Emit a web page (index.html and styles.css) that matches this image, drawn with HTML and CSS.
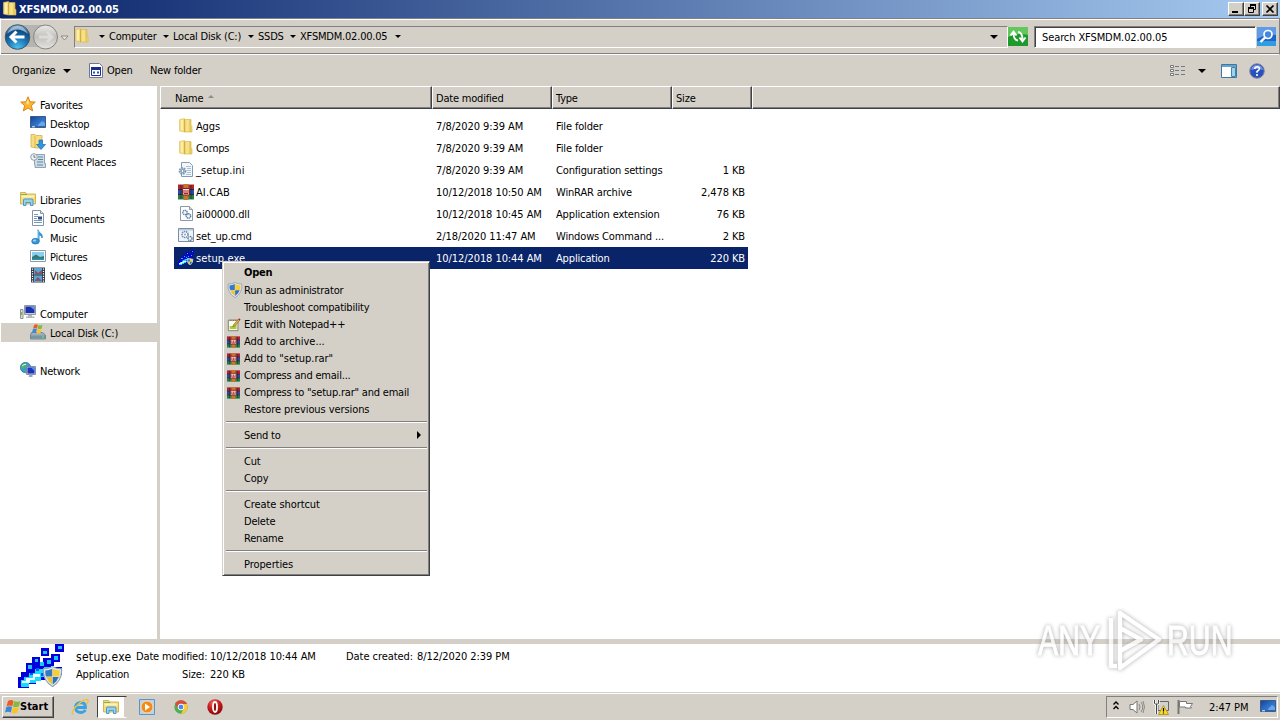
FILE: index.html
```
<!DOCTYPE html>
<html lang="en">
<head>
<meta charset="utf-8">
<title>XFSMDM.02.00.05</title>
<link rel="stylesheet" href="styles.css">
</head>
<body>
<svg class="defs" width="0" height="0">
  <defs>
    <linearGradient id="gFold" x1="0" x2="1" y1="0" y2="0"><stop offset="0" stop-color="#f4dc78"/><stop offset=".5" stop-color="#f7e48c"/><stop offset=".75" stop-color="#e4c450"/><stop offset="1" stop-color="#f3dc7c"/></linearGradient>
    <radialGradient id="gBack" cx=".5" cy=".95" r=".9"><stop offset="0" stop-color="#4cc4f0"/><stop offset=".45" stop-color="#1b78b8"/><stop offset=".8" stop-color="#124a80"/><stop offset="1" stop-color="#6fa6cc"/></radialGradient>
    <linearGradient id="gFwd" x1="0" x2="0" y1="0" y2="1"><stop offset="0" stop-color="#eceae6"/><stop offset=".5" stop-color="#c2c0bc"/><stop offset="1" stop-color="#e6e4e0"/></linearGradient>
    <linearGradient id="gScreen" x1="0" x2="1" y1="0" y2="1"><stop offset="0" stop-color="#16408c"/><stop offset=".5" stop-color="#2f6fc8"/><stop offset="1" stop-color="#3a8ae0"/></linearGradient>
    <radialGradient id="gOpera" cx=".4" cy=".25" r=".8"><stop offset="0" stop-color="#f06a60"/><stop offset=".5" stop-color="#c81a1a"/><stop offset="1" stop-color="#7c0808"/></radialGradient>
  </defs>
  <symbol id="folder" viewBox="0 0 16 16"><path d="M1.500 1.500l5-1V14l-5-1z" fill="#f5dc78" stroke="#dfc060" stroke-width=".6"/><path d="M6.500 1.500H13V8l1 .5V14H6.500z" fill="url(#gFold)" stroke="#d4b24a" stroke-width=".6"/><path d="M4 2v10.500" stroke="#fff6c4" stroke-width="1.400"/><path d="M6.700 1.500V14" stroke="#caa43a" stroke-width=".8"/></symbol>
  <symbol id="star" viewBox="0 0 16 16"><path d="M8 .8l2 5 5.300.3-4 3.500 1.400 5.300L8 12l-4.700 2.900L4.700 9.600.7 6.100 6 5.800z" fill="#fbb62e" stroke="#e2801c"/><path d="M8 3l1.200 3.500L8 9 6 6.500z" fill="#ffe28a"/></symbol>
  <symbol id="desktop" viewBox="0 0 16 16"><path d="M.5 1.500h15v11H.5z" fill="url(#gScreen)" stroke="#3a5c88"/><path d="M1 11h14v2H1z" fill="#36619c"/><path d="M8 10l4-4 3 2v3H8z" fill="#68a6ea"/><path d="M2 11.800h3" stroke="#e6f2ff"/></symbol>
  <symbol id="download" viewBox="0 0 16 16"><path d="M1 .5h4l1 1h6V14H6l-5-1z" fill="#f6dd80" stroke="#cfa640" stroke-width=".7"/><path d="M5 2v12" stroke="#cfa640" stroke-width=".7"/><path d="M9 6h3.500v4.500H15.500L11 15.500 6.500 10.500H9z" fill="#3295e0" stroke="#1b6cb4" stroke-width=".7"/></symbol>
  <symbol id="recent" viewBox="0 0 16 16"><path d="M4.500 1.500h10v9h1v4H5v-3h-.5z" fill="#cfdde6" stroke="#7790a0" stroke-width=".8"/><path d="M8 4h5M8 6.500h5M7 9h6M7 12h6" stroke="#5f84a4"/><circle cx="4" cy="4" r="3.300" fill="#f0f4f6" stroke="#8fa0aa"/><path d="M4 2v2.300h1.600" stroke="#556" fill="none" stroke-width=".8"/></symbol>
  <symbol id="libs" viewBox="0 0 16 16"><path d="M.5 1.500h5l1 1.500h9v10H.5z" fill="#f4dc7a" stroke="#c9a443" stroke-width=".8"/><path d="M1.500 4.500h13v2h-13z" fill="#fff3b4"/><path d="M1 3.500h6" stroke="#7cb55c"/><path d="M3.500 14.500V9q0-1 1-1h7.500q1 0 1 1v5.500h-2.500v-3H6v3z" fill="#94d0f2" stroke="#3f93c8" stroke-width=".9"/></symbol>
  <symbol id="doc" viewBox="0 0 16 16"><path d="M2.500.5h8l3 3v12h-11z" fill="#fff" stroke="#8494a6"/><path d="M10.500.5v3h3" fill="#dce6ee" stroke="#8494a6"/><path d="M4 4.500h4M4 6.500h4M4 8.500h3M4 10.500h8M4 12.500h8" stroke="#7c98b8"/><path d="M8 6.500h4v3H8z" fill="#27548c"/></symbol>
  <symbol id="music" viewBox="0 0 16 16"><path d="M8 .5c0 3.500 5.500 3.500 4 8.500C12 6.500 10 6 9 6v6.500" fill="#3a9bdc" stroke="#2579b8" stroke-width=".8"/><path d="M8.300 1v11" stroke="#55b4ea" stroke-width="1.500"/><ellipse cx="5.500" cy="12.200" rx="3.800" ry="2.900" fill="#3796d8" stroke="#1e68a6" stroke-width=".6"/><ellipse cx="4.500" cy="11.500" rx="1.700" ry="1.100" fill="#9ad6f6"/></symbol>
  <symbol id="picture" viewBox="0 0 16 16"><path d="M.5 2.500h15v11H.5z" fill="#fff" stroke="#8c9ba8"/><path d="M2 4h12v8H2z" fill="#8ad0ee"/><path d="M2 9l4-2.500 4 2.500 4-1v4H2z" fill="#38786e"/><path d="M2 10.500h12V12H2z" fill="#2b8fb0"/></symbol>
  <symbol id="video" viewBox="0 0 16 16"><path d="M1 .5h14v15H1z" fill="#343c48"/><path d="M4 1h8v6.500H4zM4 8.500h8V15H4z" fill="#5ba4d4"/><path d="M5 3l3 3 4-3v4H5zM5 13l3-3 4 4H5z" fill="#8a5562"/><path d="M2.500 1.500v14M13.500 1.500v14" stroke="#fff" stroke-width="1.200" stroke-dasharray="1.200 1.200"/></symbol>
  <symbol id="computer" viewBox="0 0 16 16"><path d="M.5 4.500h2.500v9H.5z" fill="#dcdcd4" stroke="#8c948e"/><path d="M1.700 7v3" stroke="#4fb44a"/><path d="M4.500.5h11v9h-11z" fill="#c8ced8" stroke="#9098a8"/><path d="M5.500 1.500h9V8h-9z" fill="#1a32b0"/><path d="M10 1.500h4.500V5z" fill="#6c90ec"/><path d="M8 10h4v1.500h2.500V13H6v-1.500h2z" fill="#b2b8c0"/></symbol>
  <symbol id="disk" viewBox="0 0 16 16"><path d="M1.500 8.500h11l3 2.500v4H.5v-4z" fill="#9cb0ba" stroke="#637882" stroke-width=".8"/><path d="M1 11.500h14v3H1z" fill="#7795a4"/><path d="M12 13h2" stroke="#5ef06a"/><use href="#flag" x="1.500" y="-.5" width="12" height="11"/></symbol>
  <symbol id="flag" viewBox="0 0 16 16"><path d="M3 2q3-2 5.500-.2L7.300 7.200Q4.500 5.600 1.600 7.200z" fill="#ee5a22"/><path d="M9.200 2.100q2.700 1.400 6-.2L14 7.300q-3.200 1.600-6 .2z" fill="#82bc38"/><path d="M1.400 8q2.900-1.500 5.700 0L5.800 13.400Q3 12 0 13.500z" fill="#3c86d8"/><path d="M7.800 8.300q2.800 1.500 6 0L12.400 13.700q-3 1.600-5.900.1z" fill="#fcc22c"/></symbol>
  <symbol id="network" viewBox="0 0 16 16"><circle cx="5.500" cy="5.500" r="5.200" fill="#3a9bd2" stroke="#2a6a9c" stroke-width=".7"/><path d="M2 2.500q4-3 5 0L4 6 1 7zM5 8l3 0v3L5 10.500z" fill="#52b45c"/><path d="M2 4q2-2 4-1.500" stroke="#d8f4ff" fill="none"/><path d="M6.500 4.500h9v8h-9z" fill="#bac6dc" stroke="#6a7ca4" stroke-width=".8"/><path d="M7.500 5.500h7v6h-7z" fill="#1a35bc"/><path d="M11 5.500h3.500V9z" fill="#5c8cf0"/><path d="M9.500 12.500h3v2.500h-4z" fill="#9aa6b4"/></symbol>
  <symbol id="ini" viewBox="0 0 16 16"><path d="M3.500.5h8l3 3v11h-11z" fill="#f2f7fb" stroke="#8a9aac"/><path d="M8 4.500h5M9 6.500h4M9 8.500h4M9 10.500h4M8 12.500h5" stroke="#a6bed6"/><circle cx="4.500" cy="9" r="3" fill="#d4e2ee" stroke="#7d97ae" stroke-width="1.800" stroke-dasharray="1.700 .8"/><circle cx="4.500" cy="9" r="1.500" fill="#fff" stroke="#5f86ac"/></symbol>
  <symbol id="dll" viewBox="0 0 16 16"><path d="M2.500.5h9l3 3v11h-12z" fill="#fff" stroke="#8c9aa8"/><path d="M11.500.5v3h3" fill="#cfdbe6" stroke="#8c9aa8"/><circle cx="7" cy="6.500" r="2.200" fill="#eef5fb" stroke="#6384ac" stroke-width="1.400" stroke-dasharray="1.300 .5"/><circle cx="10.500" cy="10" r="2.200" fill="#eef5fb" stroke="#5476a0" stroke-width="1.400" stroke-dasharray="1.300 .5"/></symbol>
  <symbol id="cmd" viewBox="0 0 16 16"><path d="M.5.500h15v13H.5z" fill="#eef3f8" stroke="#7c8ea4"/><path d="M1 1h14v1.500H1z" fill="#b9c9dc"/><circle cx="7" cy="6.500" r="3" fill="#fff" stroke="#6f8db2" stroke-width="1.600" stroke-dasharray="1.500 .6"/><circle cx="7" cy="6.500" r="1" fill="#7fa4cc"/><circle cx="12" cy="10.500" r="2" fill="#fff" stroke="#5878a0" stroke-width="1.400" stroke-dasharray="1.200 .5"/></symbol>
  <symbol id="rar" viewBox="0 0 16 16" preserveAspectRatio="none"><path d="M0 .5h16v5H0z" fill="#b3242c"/><path d="M0 5.500h16v5H0z" fill="#2c49a6"/><path d="M0 10.500h16v5H0z" fill="#238044"/><path d="M0 5.500h16M0 10.500h16" stroke="#361724" stroke-width=".9"/><path d="M3 1v14M13 1v14" stroke="#151c3c" stroke-width=".6"/><path d="M5.500 0h5v16h-5z" fill="#c47532"/><path d="M4.500 4.500h7v6.500h-7z" fill="#f2e4de" stroke="#7a2420"/><path d="M6 6v3.500h4V6M8 6v3" stroke="#b02020" fill="none"/></symbol>
  <symbol id="shield" viewBox="0 0 16 16"><path d="M8 .5q3.500 1.800 6.900 1.500.8 9-6.900 13.700Q.3 11 1.100 2 4.500 2.300 8 .5z" fill="#dfe6ea" stroke="#8ba0b0" stroke-width=".8"/><path d="M7.800 2Q5.500 3.300 2.500 3.400q-.2 2.500.6 4.600h4.700z" fill="#3579c4"/><path d="M8.200 2q2.300 1.300 5.300 1.400.2 2.500-.6 4.600H8.200z" fill="#f6cf38"/><path d="M3.300 8.300q1.200 3.500 4.500 5.800V8.300z" fill="#f0c22c"/><path d="M12.700 8.300q-1.200 3.500-4.500 5.800V8.300z" fill="#2f6fb8"/></symbol>
  <symbol id="npp" viewBox="0 0 16 16"><path d="M1.500 2.500h11v12h-11z" fill="#fbfbe9" stroke="#777762"/><path d="M3 12.500V9q5 1 8-4v7.500z" fill="#a4cf42"/><path d="M3 2.500h9" stroke="#555" stroke-dasharray="1 1"/><path d="M6.500 10l1-2.500L13 1.500l1.500 1.200L9 9z" fill="#eca93a" stroke="#7e5a20" stroke-width=".6"/><path d="M12.800 1.700l1.400-1.300 1.300 1.200-1.200 1.200z" fill="#b52820"/></symbol>
  <symbol id="setup" viewBox="0 0 46 46" shape-rendering="crispEdges">
    <path d="M0 34h3v-5h5v-6h8v-4h9v-4h11v8h-3v8h-6v6h-9v4h-7v4H0z" fill="#0000dc"/>
    <path d="M37 1h9v8h-9zM23 5h8v8h-8zM33 11h9v8h-9zM14 14h8v8h-8zM8 20h8v8H8zM36 24h8v8h-8z" fill="#0000dc"/>
    <path d="M40 3h4v3h-4zM25 8h4v3h-4zM36 13h4v4h-4zM17 16h3v3h-3zM10 22h4v4h-4zM29 17h4v4h-4zM22 19h4v4h-4z" fill="#19c5ff"/>
    <path d="M3 37h3v-3h5v-4h6v-4h9v-2h7v5h-4v5h-6v4h-5v2h-7v4H3z" fill="#18dcff"/>
    <path d="M4 38h4v-3h7v-4h7v3h-5v3h-5v3H4z" fill="#e9ffff"/>
    <path d="M18 25h3v3h-3zM23 30h3v3h-3zM12 30h3v2h-3z" fill="#0055ff"/>
    <use href="#shield" x="24" y="23" width="21" height="21" shape-rendering="auto"/>
  </symbol>
  <symbol id="down" viewBox="0 0 8 4"><path d="M0 0h8L4 4z" fill="#000"/></symbol>
</svg>

<div class="screen">
  <header class="titlebar">
    <svg class="i16"><use href="#folder"/></svg>
    <span class="title">XFSMDM.02.00.05</span>
    <div class="winbtns">
      <span class="wb"><svg viewBox="0 0 14 12"><path d="M3 9h6" stroke="#000" stroke-width="2"/></svg></span>
      <span class="wb"><svg viewBox="0 0 14 12"><path d="M5.500 4V1.500h5v5H9M3.500 4.500h5v5h-5z" fill="none" stroke="#000"/><path d="M5 2h6M3 5h6" stroke="#000" stroke-width="2"/></svg></span>
      <span class="wb close"><svg viewBox="0 0 14 12"><path d="M3.500 2.500l7 7M10.500 2.500l-7 7" stroke="#000" stroke-width="1.700"/></svg></span>
    </div>
  </header>

  <nav class="navbar">
    <svg class="travel" viewBox="0 0 72 30"><rect x="14" y="3" width="34" height="22" rx="6" fill="#b6b4b0"/><circle cx="17.500" cy="15" r="12.300" fill="url(#gBack)" stroke="#44586a"/><path d="M7 12q10-9 21 0-4-8-10.500-8T7 12z" fill="#cfe2ef" opacity=".6"/><path d="M16.500 9.500L11 15l5.500 5.500M11.500 15h13" fill="none" stroke="#fff" stroke-width="3"/><circle cx="45.500" cy="15" r="12" fill="url(#gFwd)" stroke="#85837f"/><path d="M47 10l5 5-5 5M51 15H39" fill="none" stroke="#dddbd7" stroke-width="3"/><path d="M61 14h7L64.500 18z" fill="#e8e6e2" stroke="#8c8a84"/></svg>
    <div class="address">
      <svg class="i16"><use href="#folder"/></svg>
      <svg class="dn a0"><use href="#down"/></svg><span class="c1">Computer</span>
      <svg class="dn"><use href="#down"/></svg><span class="c2">Local Disk (C:)</span>
      <svg class="dn"><use href="#down"/></svg><span class="c3">SSDS</span>
      <svg class="dn"><use href="#down"/></svg><span class="c4">XFSMDM.02.00.05</span>
      <svg class="dn"><use href="#down"/></svg>
      <svg class="dn history"><use href="#down"/></svg>
    </div>
    <svg class="refresh" viewBox="0 0 20 19"><rect width="20" height="19" fill="#1e9a2c"/><path d="M0 0h20v8Q10 5 0 10z" fill="#62c85e"/><path d="M10 13.500Q5.500 13 5.500 6M2.500 8.500l3-4 3 4M10 5q4.500.5 4.500 7.500M11.500 10.500l3 4 3-4" fill="none" stroke="#fff" stroke-width="1.900"/></svg>
    <div class="search">Search XFSMDM.02.00.05</div>
    <svg class="go" viewBox="0 0 19 19"><rect width="19" height="19" fill="#1f63cc"/><path d="M0 0h19v8Q9 7 0 12z" fill="#5f9be8"/><path d="M0 14h19v5H0z" fill="#2f9ce4"/><circle cx="11" cy="7.500" r="4" fill="#4686dc" stroke="#fff" stroke-width="1.700"/><path d="M8 10.500L3.500 15" stroke="#fff" stroke-width="2.400"/></svg>
  </nav>

  <div class="toolbar">
    <span class="organize">Organize</span><svg class="dn2"><use href="#down"/></svg>
    <svg class="openi" viewBox="0 0 14 15"><path d="M.5.500h10l3 3v11h-13z" fill="#fff" stroke="#6c7894"/><path d="M2 4h10v3H2z" fill="#162c94"/><path d="M2.500 6.500h9v6h-9z" fill="#fff" stroke="#162c94"/><path d="M4 8.500h2v2H4zM8 8.500h2v2H8z" fill="#2b52a8"/></svg>
    <span class="open">Open</span><span class="newf">New folder</span>
    <div class="tools">
      <svg class="view" viewBox="0 0 16 12"><path d="M.5.500h3v2h-3zM.5 4.500h3v2h-3zM.5 8.500h3v2h-3z" fill="#fff" stroke="#777"/><path d="M5 1.500h4M11 1.500h4M5 5.500h4M11 5.500h4M5 9.500h4M11 9.500h4" stroke="#707c84"/></svg>
      <svg class="dn2"><use href="#down"/></svg>
      <svg class="pane" viewBox="0 0 16 14"><path d="M.5.500h15v13H.5z" fill="#fff" stroke="#3f76a2"/><path d="M1 1h14v2H1z" fill="#65a5ca"/><path d="M10.500 3.500h4v9h-4z" fill="#9fd4e8" stroke="#3f86ac"/></svg>
      <svg class="help" viewBox="0 0 16 16"><circle cx="8" cy="8" r="7.300" fill="#2850bc" stroke="#7f8ca4"/><path d="M2 7q1-5 6-5t6 5Q8 5 2 7z" fill="#7894e0"/><path d="M5.700 6Q6 3.800 8.200 3.800q2.300.1 2.200 2Q10.300 7.200 8 8.500v1.300M8 11v2" stroke="#fff" stroke-width="1.600" fill="none"/></svg>
    </div>
  </div>

  <div class="body">
    <aside class="side">
      <div class="n"><svg class="i16"><use href="#star"/></svg>Favorites</div>
      <div class="n s"><svg class="i16"><use href="#desktop"/></svg>Desktop</div>
      <div class="n s"><svg class="i16"><use href="#download"/></svg>Downloads</div>
      <div class="n s"><svg class="i16"><use href="#recent"/></svg>Recent Places</div>
      <div class="n top"><svg class="i16"><use href="#libs"/></svg>Libraries</div>
      <div class="n s"><svg class="i16"><use href="#doc"/></svg>Documents</div>
      <div class="n s"><svg class="i16"><use href="#music"/></svg>Music</div>
      <div class="n s"><svg class="i16"><use href="#picture"/></svg>Pictures</div>
      <div class="n s"><svg class="i16"><use href="#video"/></svg>Videos</div>
      <div class="n top"><svg class="i16"><use href="#computer"/></svg>Computer</div>
      <div class="n s on"><svg class="i16"><use href="#disk"/></svg>Local Disk (C:)</div>
      <div class="n top"><svg class="i16"><use href="#network"/></svg>Network</div>
    </aside>
    <main class="files">
      <div class="head">
        <div class="h name">Name<svg class="sort" viewBox="0 0 6 3"><path d="M0 3h6L3 0z" fill="#908c86"/></svg></div>
        <div class="h">Date modified</div><div class="h">Type</div><div class="h size">Size</div><div class="h rest"></div>
      </div>
      <div class="rows">
        <div class="r"><svg class="i16"><use href="#folder"/></svg><span>Aggs</span><span class="d">7/8/2020 9:39 AM</span><span>File folder</span><span class="k"></span></div>
        <div class="r"><svg class="i16"><use href="#folder"/></svg><span>Comps</span><span class="d">7/8/2020 9:39 AM</span><span>File folder</span><span class="k"></span></div>
        <div class="r"><svg class="i16"><use href="#ini"/></svg><span class="f">_setup.ini</span><span class="d">7/8/2020 9:39 AM</span><span>Configuration settings</span><span class="k">1 KB</span></div>
        <div class="r"><svg class="i16"><use href="#rar"/></svg><span class="f">AI.CAB</span><span class="d">10/12/2018 10:50 AM</span><span>WinRAR archive</span><span class="k">2,478 KB</span></div>
        <div class="r"><svg class="i16"><use href="#dll"/></svg><span>ai00000.dll</span><span class="d">10/12/2018 10:45 AM</span><span>Application extension</span><span class="k">76 KB</span></div>
        <div class="r"><svg class="i16"><use href="#cmd"/></svg><span>set_up.cmd</span><span class="d">2/18/2020 11:47 AM</span><span>Windows Command ...</span><span class="k">2 KB</span></div>
        <div class="r sel"><svg class="i16"><use href="#setup"/></svg><span class="f">setup.exe</span><span class="d">10/12/2018 10:44 AM</span><span>Application</span><span class="k">220 KB</span></div>
      </div>
    </main>
  </div>

  <section class="details">
    <svg class="big"><use href="#setup"/></svg>
    <div class="dgrid">
      <span class="fname">setup.exe</span><span class="lab">Date modified:</span><span class="val">10/12/2018 10:44 AM</span><span class="cr">Date created:</span><span class="crv">8/12/2020 2:39 PM</span>
      <span>Application</span><span class="lab">Size:</span><span class="val">220 KB</span>
    </div>
  </section>

  <footer class="taskbar">
    <div class="start"><svg class="flag"><use href="#flag"/></svg>Start</div>
    <svg class="ie" viewBox="0 0 18 18"><path d="M14.500 12Q12.800 14.500 9.500 14.500 4.500 14 4.500 9.500T9.500 4.500q5 0 5 5H6" fill="none" stroke="#3aa2e0" stroke-width="2.800"/><path d="M2 16.500Q-.5 14 6 7.500T16.500 1.500q1.500 1.500-1 5" fill="none" stroke="#ecc23c" stroke-width="1.400"/></svg>
    <div class="tab"><svg class="i16"><use href="#libs"/></svg></div>
    <svg class="wmp" viewBox="0 0 16 16"><path d="M.5.500h15v15H.5z" fill="#b8d4ee" stroke="#5f93c4"/><circle cx="8" cy="8" r="6" fill="#f38b16" stroke="#fbd8a4"/><path d="M6 4.500L11 8l-5 3.500z" fill="#fff"/></svg>
    <svg class="chrome" viewBox="0 0 16 16"><circle cx="8" cy="8" r="6.700" fill="#4caf50"/><path d="M2 5A6.700 6.700 0 0 1 14 5H8L5 9z" fill="#dd4b39"/><path d="M14 5A6.700 6.700 0 0 1 8 14.700L11 9l-1-4z" fill="#fcc934"/><circle cx="8" cy="8" r="2.900" fill="#4688f1" stroke="#fff" stroke-width="1"/></svg>
    <svg class="opera" viewBox="0 0 16 16"><circle cx="8" cy="8" r="7.700" fill="url(#gOpera)"/><ellipse cx="8" cy="8" rx="2" ry="5" fill="#901010" stroke="#fff" stroke-width="1.800"/></svg>
    <div class="tray">
      <svg class="chev" viewBox="0 0 6 9"><path d="M.5 3.500L3 1l2.500 2.500M.5 8L3 5.500 5.500 8" fill="none" stroke="#000" stroke-width="1.400"/></svg>
      <svg class="vol" viewBox="0 0 16 16"><path d="M1 5.500h3L8 2v12L4 10.500H1z" fill="#fff" stroke="#777"/><path d="M10 5q2 3 0 6M12 3q3.500 5 0 10M14 2q3 6 0 12" fill="none" stroke="#8a8884"/></svg>
      <svg class="net" viewBox="0 0 16 16"><path d="M5 2.500h10.500v9H5z" fill="#d2d2cc" stroke="#666"/><path d="M1.500 1v3q0 1 1 1h2q1 0 1-1V1M3.500 5v10" fill="none" stroke="#fff" stroke-width="2.400"/><path d="M1.500 1v3q0 1 1 1h2q1 0 1-1V1M3.500 5v10" fill="none" stroke="#444"/><path d="M10.500 6.500L15.500 15.500h-10z" fill="#ffdb22" stroke="#a88d10" stroke-width=".8"/><path d="M10.500 9v3.500M10.500 13.500v1" stroke="#000" stroke-width="1.200"/></svg>
      <svg class="act" viewBox="0 0 16 16"><path d="M1.500 1v14" stroke="#777" stroke-width="2"/><path d="M2.500 2.500h7v2h6l-2 3 1 1.500H8.500V8h-6z" fill="#fff" stroke="#777"/></svg>
      <span class="clock">2:47 PM</span>
      <svg class="i16 show"><use href="#desktop"/></svg>
    </div>
  </footer>

  <div class="menu">
    <div class="m b">Open</div>
    <div class="m tall"><svg><use href="#shield"/></svg>Run as administrator</div>
    <div class="m">Troubleshoot compatibility</div>
    <div class="m"><svg><use href="#npp"/></svg>Edit with Notepad++</div>
    <div class="m"><svg class="mr"><use href="#rar"/></svg><span class="w1">Add to archive...</span></div>
    <div class="m"><svg class="mr"><use href="#rar"/></svg><span class="w1">Add to "setup.rar"</span></div>
    <div class="m"><svg class="mr"><use href="#rar"/></svg>Compress and email...</div>
    <div class="m"><svg class="mr"><use href="#rar"/></svg>Compress to "setup.rar" and email</div>
    <div class="m w2">Restore previous versions</div>
    <hr>
    <div class="m">Send to<i class="arrow"></i></div>
    <hr>
    <div class="m">Cut</div>
    <div class="m">Copy</div>
    <hr>
    <div class="m w2">Create shortcut</div>
    <div class="m">Delete</div>
    <div class="m">Rename</div>
    <hr>
    <div class="m w2">Properties</div>
  </div>

  <div class="mark">
    <span class="word">ANY</span>
    <svg viewBox="0 0 56 66"><g fill="none" stroke="#fff" stroke-width="4.500" stroke-linejoin="round"><path d="M13 55V5L52 31.500 13 60V43L34 31.500 13 20"/><path d="M4 10v48h6"/></g></svg>
    <span class="word run">RUN</span>
  </div>
</div>
</body>
</html>
```
FILE: styles.css
```
* { box-sizing: border-box; }
body { margin: 0; background: #d4d0c8; overflow: hidden; }
svg { display: block; flex: none; }
.defs { position: absolute; }
.screen { position: relative; width: 1280px; height: 720px; display: flex; flex-direction: column; background: #d4d0c8; color: #000; font: 11px/14px "DejaVu Sans Condensed", "DejaVu Sans", sans-serif; font-stretch: condensed; letter-spacing: -0.2px; white-space: nowrap; cursor: default; }
.i16 { width: 16px; height: 16px; }

.titlebar { display: flex; align-items: center; height: 18px; padding: 0 2px; background: linear-gradient(90deg, #0a246a, #a6caf0); color: #fff; }
.titlebar .i16 { margin-left: 0; }
.title { margin: 1px 0 0 1px; font-weight: bold; letter-spacing: -0.15px; }
.winbtns { display: flex; margin-left: auto; }
.wb { width: 16px; height: 14px; background: #d4d0c8; border: 1px solid; border-color: #fff #404040 #404040 #fff; box-shadow: inset -1px -1px #808080; }
.wb svg { width: 14px; height: 12px; }
.close { margin-left: 2px; }

.navbar { display: flex; align-items: center; height: 37px; padding: 0 2px 0 0; border: 1px solid; border-color: #808080 #808080 #fff #fff; box-shadow: inset 0 1px #fff, inset 0 -1px #808080; }
.travel { width: 72px; height: 30px; margin-left: -1px; }
.address { display: flex; align-items: center; width: 934px; height: 22px; margin-left: 2px; border: 1px solid; border-color: #808080 #fff #fff #808080; }
.address .i16 { margin: -1px 1px 0 -1px; }
.dn { width: 6px; height: 3px; margin: 0 4px 0 5px; }
.a0 { margin-left: 8px; margin-right: 4px; }
.c1 { width: 49px; }
.c2 { width: 70px; }
.c3 { width: 27px; }
.c4 { width: 90px; }
.history { width: 8px; height: 4px; margin-left: auto; margin-right: 9px; }
.refresh { width: 20px; height: 19px; }
.search { width: 222px; height: 22px; margin-left: 6px; padding: 4px 7px; letter-spacing: -0.1px; background: #fff; border: 1px solid; border-color: #808080 #fff #fff #808080; box-shadow: inset 1px 1px #404040; }
.go { width: 19px; height: 19px; margin-left: 1px; }

.toolbar { display: flex; align-items: center; height: 31px; padding: 0 15px 0 12px; }
.organize { width: 44px; letter-spacing: -0.1px; }
.dn2 { width: 8px; height: 4px; margin-left: 7px; }
.openi { width: 14px; height: 15px; margin-left: 18px; }
.open { width: 27px; margin-left: 4px; }
.newf { margin-left: 16px; }
.tools { display: flex; align-items: center; margin-left: auto; }
.view { width: 16px; height: 12px; }
.tools .dn2 { margin-left: 12px; }
.pane { width: 16px; height: 14px; margin-left: 15px; }
.help { width: 16px; height: 16px; margin-left: 12px; }

.body { display: flex; height: 553px; }
.side { width: 160px; padding-top: 9px; background: #fff; border-right: 3px solid #d4d0c8; }
.n { display: flex; align-items: center; height: 19px; padding: 2px 0 0 20px; }
.n svg { margin: -3px 4px 0 0; }
.n.s { padding-left: 30px; }
.top { margin-top: 19px; }
.n.on { margin-left: 1px; padding-left: 29px; background: #d4d0c8; }
.files { flex: 1; background: #fff; }
.head { display: flex; height: 23px; }
.h { display: flex; align-items: center; width: 120px; padding: 2px 0 0 3px; background: #d4d0c8; border: 1px solid; border-color: #fff #404040 #404040 #fff; box-shadow: inset -1px -1px #808080; }
.name { width: 272px; padding-left: 14px; }
.size { width: 80px; }
.rest { flex: 1; }
.sort { width: 6px; height: 3px; margin: -4px 0 0 5px; }
.rows { padding: 6px 0 0 14px; }
.r { display: grid; grid-template-columns: 16px 240px 120px 117px 77px; align-items: center; width: 574px; height: 22px; padding-left: 4px; }
.r svg { margin-top: -1px; }
.r span { padding: 2px 0 0 2px; letter-spacing: -0.15px; }
.r .f { letter-spacing: 0.1px; }
.r .d { letter-spacing: -0.07px; }
.r .k { padding-right: 3px; text-align: right; letter-spacing: -0.1px; }
.sel { color: #fff; background: #0a246a; }

.details { display: flex; height: 54px; padding-left: 18px; background: #fff; border-top: 5px solid #d4d0c8; border-bottom: 1px solid #d4d0c8; }
.big { width: 46px; height: 46px; margin-top: -1px; }
.dgrid { display: grid; grid-template-columns: 60px 69px 141px 71px 120px; grid-template-rows: 18px 18px; align-items: center; margin: 4px 0 0 12px; height: 36px; }
.fname { font-size: 12px; letter-spacing: 0.3px; }
.lab { text-align: right; letter-spacing: -0.15px; }
.val { padding-left: 5px; letter-spacing: -0.07px; }
.cr, .crv { letter-spacing: -0.06px; }

.taskbar { display: flex; align-items: center; height: 27px; padding: 0 2px; border-top: 1px solid #fff; }
.start { display: flex; align-items: center; width: 52px; height: 22px; padding-left: 2px; font-weight: bold; letter-spacing: 0; border: 1px solid; border-color: #fff #404040 #404040 #fff; box-shadow: inset -1px -1px #808080; }
.flag { width: 16px; height: 16px; margin-right: -1px; }
.ie { width: 18px; height: 18px; margin-left: 17px; }
.tab { width: 30px; height: 22px; margin-left: 8px; padding: 2px 5px; background: #fff; border: 1px solid; border-color: #404040 #d4d0c8 #fff #404040; box-shadow: inset -2px 0 #d4d0c8; }
.wmp { width: 16px; height: 16px; margin-left: 12px; }
.chrome { width: 16px; height: 16px; margin-left: 18px; }
.opera { width: 16px; height: 16px; margin-left: 18px; }
.tray { display: flex; align-items: center; width: 172px; height: 22px; margin-left: auto; padding-left: 6px; border: 1px solid; border-color: #808080 #fff #fff #808080; }
.chev { width: 6px; height: 9px; margin-top: -3px; }
.vol { width: 16px; height: 16px; margin-left: 10px; }
.net { width: 16px; height: 16px; margin-left: 8px; }
.act { width: 16px; height: 16px; margin-left: 8px; }
.clock { width: 40px; margin: 1px 0 0 16px; letter-spacing: -0.05px; }
.show { margin-left: 11px; }

.menu { position: absolute; left: 222px; top: 261px; width: 208px; height: 315px; padding: 1px; background: #d4d0c8; border: 1px solid; border-color: #d4d0c8 #404040 #404040 #d4d0c8; box-shadow: inset 1px 1px #fff, inset -1px -1px #808080; }
.m { display: flex; align-items: center; height: 17px; padding-left: 20px; }
.menu .m:first-child { margin-top: 1px; }
.menu .tall { height: 18px; padding-top: 1px; }
.m svg { width: 14px; height: 14px; margin: 0 3px 0 -17px; }
.m .mr { width: 13px; height: 12px; margin-right: 4px; }
.menu .tall svg { width: 16px; height: 16px; margin: -1px 1px 0 -17px; }
.b { font-weight: bold; }
.w1 { letter-spacing: -0.02px; }
.w2 { letter-spacing: -0.08px; }
.menu hr { height: 2px; margin: 3px 1px 4px 2px; border: 0; background: linear-gradient(#808080 50%, #fff 50%); }
.arrow { margin: -2px 7px 0 auto; border: 4px solid transparent; border-left: 4px solid #000; border-right: 0; }

.mark { position: absolute; left: 1038px; top: 608px; display: flex; align-items: center; width: 200px; height: 66px; opacity: .75; filter: drop-shadow(0 0 2px #8c8c8c); }
.mark svg { width: 56px; height: 66px; margin-left: 5px; }
.word { width: 64px; color: #fff; font: 42px/46px "Liberation Sans Narrow", "Liberation Sans", sans-serif; letter-spacing: 0; transform: scaleX(.72); transform-origin: 0 50%; -webkit-text-stroke: 1px #fff; }
.run { margin-left: 4px; }
```
